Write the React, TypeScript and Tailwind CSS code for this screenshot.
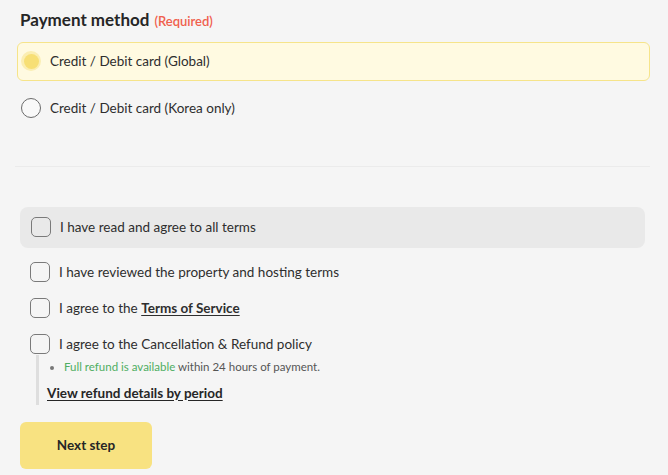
import React, { useState } from 'react'

const font = { fontFamily: 'Lato, "Noto Sans", sans-serif' }

const Radio: React.FC<{ checked: boolean }> = ({ checked }) =>
  checked ? (
    <span className="flex h-5 w-5 shrink-0 items-center justify-center rounded-full bg-[#fbeeb2]">
      <span className="h-[15px] w-[15px] rounded-full bg-[#f7df75]" />
    </span>
  ) : (
    <span className="h-5 w-5 shrink-0 rounded-full border border-[#6b6b6b] bg-white/40" />
  )

const Checkbox: React.FC = () => (
  <span className="h-5 w-5 shrink-0 rounded-[5px] border border-[#7a7a7a]" />
)

export default function App() {
  const [method, setMethod] = useState('global')

  const options = [
    { id: 'global', label: 'Credit / Debit card (Global)' },
    { id: 'korea', label: 'Credit / Debit card (Korea only)' },
  ]

  return (
    <div className="min-h-screen w-[668px] bg-[#f5f5f5] text-[#2e2e2e]" style={font}>
      <div className="w-[650px] pl-[17px]">
        {/* Payment method */}
        <div className="flex items-baseline gap-[5px] pl-[3px] pt-[7px]">
          <h2 className="text-[17px] font-bold text-[#262626]">Payment method</h2>
          <span className="text-[13px] font-semibold text-[#f0604d]">(Required)</span>
        </div>

        <div className="mt-[9px] flex flex-col gap-[8px]">
          {options.map((o) => {
            const active = method === o.id
            return (
              <button
                key={o.id}
                onClick={() => setMethod(o.id)}
                className={
                  'flex h-[39px] items-center gap-[9px] rounded-[6px] border pl-[3px] text-left text-[13.5px] ' +
                  (active ? 'border-[#f6e48a] bg-[#fffae1]' : 'border-transparent')
                }
              >
                <Radio checked={active} />
                <span>{o.label}</span>
              </button>
            )
          })}
        </div>

        <div className="ml-[-2px] mt-[38px] h-px bg-[#ebebeb]" />

        {/* Terms */}
        <div className="ml-[3px] mt-[40px] flex h-[41px] w-[625px] items-center gap-[9px] rounded-[8px] bg-[#e9e9e9] pl-[11px] text-[13.5px]">
          <Checkbox />
          <span>I have read and agree to all terms</span>
        </div>

        <div className="ml-[13px] mt-[14px] flex flex-col gap-[16px] text-[13.5px]">
          <label className="flex items-center gap-[9px]">
            <Checkbox />
            <span>I have reviewed the property and hosting terms</span>
          </label>
          <label className="flex items-center gap-[9px]">
            <Checkbox />
            <span>
              I agree to the{' '}
              <a className="font-bold underline underline-offset-2">Terms of Service</a>
            </span>
          </label>
          <div>
            <label className="flex items-center gap-[9px]">
              <Checkbox />
              <span>I agree to the Cancellation &amp; Refund policy</span>
            </label>
            <div className="ml-[6px] mt-px border-l-[3px] border-[#dedede] pb-[2px] pl-[8px]">
              <ul className="list-disc pl-[17px] pt-[3px] text-[11.5px] text-[#555] marker:text-[#777]">
                <li>
                  <span className="text-[#4fae62]">Full refund is available</span> within 24 hours of payment.
                </li>
              </ul>
              <a className="mt-[7px] inline-block text-[13.5px] font-bold text-[#262626] underline underline-offset-2">
                View refund details by period
              </a>
            </div>
          </div>
        </div>

        <button className="ml-[3px] mt-[17px] flex h-[47px] w-[132px] items-center justify-center rounded-[6px] bg-[#f8e281] text-[13.5px] font-bold text-[#262626]">
          Next step
        </button>
      </div>
    </div>
  )
}
